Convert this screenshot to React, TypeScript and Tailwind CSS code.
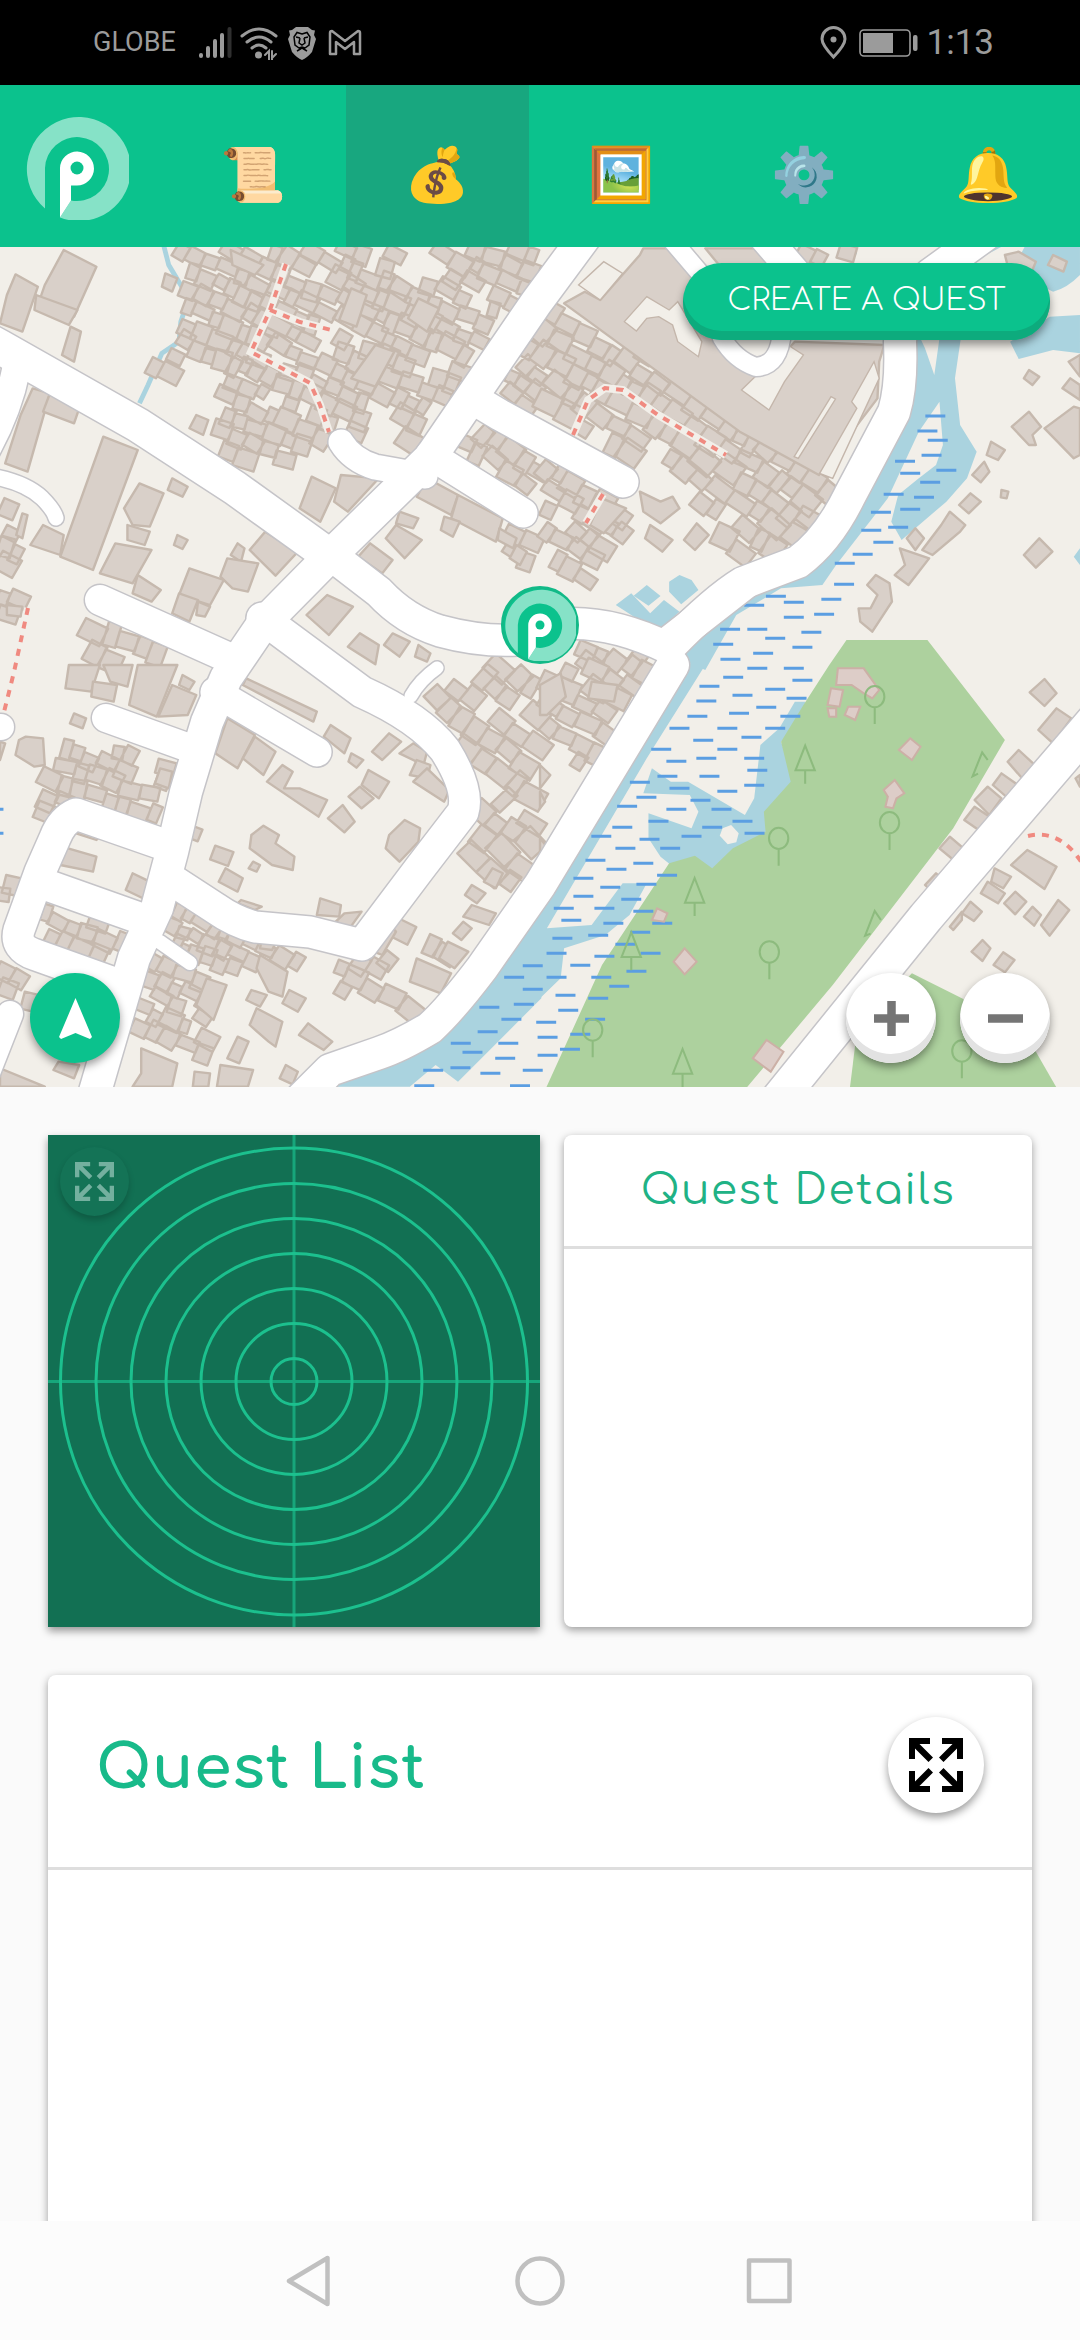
import React from "react";

type Pt = [number, number];

/* ---------- map data: four tiles, each with its own local grid ---------- */

const TILE = [
  "translate(0 245) scale(0.34437 0.33333)",
  "translate(540 245) scale(0.34437 0.33333)",
  "translate(0 665) scale(0.34437 0.33333)",
  "translate(540 665) scale(0.34437 0.33333)",
];

const parse = (s: string): Pt[] => s.split(" ").map((p) => p.split(",").map(Number) as Pt);

const inside = (x: number, y: number, poly: Pt[]) => {
  let hit = false;
  for (let i = 0, j = poly.length - 1; i < poly.length; j = i++) {
    const [xi, yi] = poly[i];
    const [xj, yj] = poly[j];
    if (yi > y !== yj > y && x < ((xj - xi) * (y - yi)) / (yj - yi) + xi) hit = !hit;
  }
  return hit;
};

type Cluster = { t: number; pts: string; a: number; c: number; holes?: string[] };

const CLUSTERS: Cluster[] = [
  {
    t: 0, a: 24, c: 50,
    pts: "515,10 1568,10 1568,90 1470,200 1330,410 1180,615 1060,575 960,530 930,650 820,680 690,650 600,590 660,400 540,350 430,460 440,370 520,290 550,160",
    holes: ["1150,30 1250,30 1235,115 1160,90", "1045,440 1170,480 1165,585 1080,540", "1350,150 1430,140 1430,200 1370,205", "905,90 960,60 1000,140 920,120", "1010,290 1085,290 1060,345", "1250,290 1300,290 1330,400 1260,350"],
  },
  { t: 0, a: 33, c: 50, pts: "1450,430 1568,240 1568,510" },
  { t: 0, a: 33, c: 52, pts: "1380,530 1568,630 1568,770 1310,610" },
  { t: 0, a: 28, c: 46, pts: "1460,850 1568,880 1568,950 1500,960" },
  { t: 0, a: 20, c: 50, pts: "0,740 70,760 50,860 30,900 55,940 40,1000 0,1000" },
  { t: 0, a: 20, c: 48, pts: "0,1020 40,1020 70,1100 20,1130 20,1240 0,1250" },
  { t: 0, a: 22, c: 62, pts: "260,1115 500,1225 510,1260 220,1260" },
  {
    t: 1, a: 33, c: 58,
    pts: "0,210 70,170 860,700 790,850 700,930 600,940 480,840 440,720 380,690 290,640 0,500",
    holes: ["330,680 400,690 440,760 380,780", "150,260 220,290 210,310 150,290"],
  },
  { t: 1, a: 33, c: 52, pts: "0,640 250,770 270,870 200,930 110,1030 0,940" },
  { t: 1, a: 30, c: 46, pts: "110,1190 210,1200 370,1260 100,1260" },
  { t: 1, a: 25, c: 50, pts: "740,10 900,10 940,60 780,40" },
  { t: 2, a: 38, c: 62, pts: "1230,100 1300,20 1568,0 1568,600 1500,690 1400,640 1290,610 1390,450 1400,330 1290,160", holes: ["1400,340 1450,330 1460,390 1410,380", "1480,380 1530,420 1500,440"] },
  { t: 3, a: 32, c: 54, pts: "0,0 330,0 130,330 70,310 110,240 0,230", holes: ["90,20 200,30 180,60 90,60"] },
  { t: 2, a: 18, c: 50, pts: "250,225 500,310 465,480 220,390 170,470 100,460 130,330 190,250", holes: ["390,330 440,330 440,370 390,370"] },
  { t: 2, a: 22, c: 50, pts: "135,700 365,800 330,890 95,810" },
  { t: 2, a: 25, c: 44, pts: "510,720 700,820 900,870 900,910 690,920 560,880 470,800" },
  { t: 2, a: 24, c: 48, pts: "450,860 590,950 640,1120 620,1190 380,1110 410,940", holes: ["440,1010 490,1020 480,1060 440,1050"] },
  { t: 2, a: 22, c: 48, pts: "0,890 140,940 100,1030 0,960" },
  { t: 2, a: 15, c: 50, pts: "0,590 60,600 20,720 0,770" },
  { t: 2, a: 30, c: 52, pts: "970,890 1130,880 1100,980 1250,1010 1170,1065 1060,1010 970,980" },
  { t: 2, a: 30, c: 50, pts: "1160,790 1290,810 1350,860 1300,900 1220,890 1150,850" },
  { t: 2, a: 30, c: 50, pts: "1240,680 1250,720 1200,770 1170,740" },
  { t: 2, a: 20, c: 46, pts: "560,490 680,560 670,590 560,530" },
];

const clusterPath = (cl: Cluster, seed: number) => {
  let s = seed * 7919 + 13;
  const rnd = () => {
    s = (s * 16807) % 2147483647;
    return s / 2147483647;
  };
  const poly = parse(cl.pts);
  const holes = (cl.holes ?? []).map(parse);
  const cx = poly[0][0];
  const cy = poly[0][1];
  const r = (cl.a * Math.PI) / 180;
  const co = Math.cos(r);
  const si = Math.sin(r);
  let d = "";
  for (let v = -1700; v < 1700; v += cl.c) {
    let u = -1700 + rnd() * cl.c;
    while (u < 1700) {
      const w = cl.c * (0.55 + rnd() * 0.75);
      const h = cl.c * (0.72 + rnd() * 0.5);
      const skip = rnd() < 0.05;
      const mu = u + w / 2;
      const mv = v + (rnd() - 0.5) * 22;
      const x = cx + mu * co - mv * si;
      const y = cy + mu * si + mv * co;
      if (!skip && inside(x, y, poly) && !holes.some((q) => inside(x, y, q))) {
        const k = (rnd() - 0.5) * 0.34;
        const c2 = Math.cos(r + k);
        const s2 = Math.sin(r + k);
        const pts = [[-w / 2, -h / 2], [w / 2, -h / 2], [w / 2, h / 2], [-w / 2, h / 2]].map(
          ([a, b]) => `${(x + a * c2 - b * s2).toFixed(0)} ${(y + a * s2 + b * c2).toFixed(0)}`
        );
        d += `M${pts.join("L")}Z`;
      }
      u += w;
    }
  }
  return d;
};

const BUILDINGS: string[][] = [
  [
    "185,15 280,65 215,215 105,195 130,120", "105,150 225,195 200,240 100,195", "45,88 110,125 65,260 0,235 20,150",
    "205,245 235,260 215,350 180,330", "480,85 515,100 500,140 470,125", "95,430 145,445 80,680 15,655 60,510",
    "145,445 230,490 215,535 125,500", "300,575 400,615 270,975 175,935", "125,840 185,870 175,930 88,900",
    "405,715 475,745 435,845 385,840 360,790", "500,700 545,725 530,755 487,735", "370,840 435,860 420,900 370,885",
    "515,870 545,885 530,912 505,900", "335,895 440,915 385,1015 290,985", "400,990 467,1035 440,1070 385,1045",
    "770,860 865,920 800,992 725,915", "690,895 710,910 700,950 670,930", "660,940 750,955 720,1040 675,1030 640,995",
    "550,970 650,1005 610,1080 520,1050", "520,1045 575,1065 550,1130 500,1105", "575,1070 610,1085 595,1115 570,1110",
    "905,695 975,730 930,830 870,790", "990,690 1100,700 1010,800 970,770", "80,810 65,880 47,870 65,805",
    "570,510 605,525 590,570 550,550", "1090,300 1145,320 1090,425 1020,400", "670,15 765,60 740,90 675,60",
    "1020,130 1065,150 1035,245 985,225", "1215,160 1275,190 1240,260 1185,220", "780,200 850,240 830,275 770,245",
    "1240,700 1330,750 1310,810 1210,755", "1330,750 1460,820 1440,890 1310,820", "1290,815 1335,830 1315,875 1280,855",
    "1150,840 1225,885 1175,940 1120,880", "1075,895 1140,945 1110,985 1040,935", "1160,800 1215,820 1200,850 1150,835",
    "1450,850 1500,880 1490,910 1445,885", "1500,900 1530,920 1510,960 1480,940",
    "950,1050 1025,1085 955,1170 890,1110", "1045,1165 1100,1200 1090,1258 1010,1205", "1140,1165 1190,1190 1160,1235 1115,1200",
    "1215,1200 1250,1225 1240,1250 1205,1235", "20,1080 65,1085 60,1115 20,1110",
  ],
  [
    "300,10 380,10 470,100 440,190 520,290 560,340 620,390 660,380 740,290 1000,300 985,350 980,460 810,690 580,560 70,175 130,140 175,165 290,30",
    "480,10 620,10 740,60 520,60", "1350,30 1390,20 1440,50 1420,100 1360,70", "1490,30 1530,50 1520,80 1475,60",
    "1420,375 1450,395 1430,420 1405,400", "1420,500 1455,545 1430,570 1440,600 1420,600 1370,545", "1550,485 1568,490 1568,630 1550,640 1465,550",
    "1535,350 1568,330 1568,395", "1540,400 1568,420 1568,465 1517,430", "1310,590 1350,615 1330,645 1297,630",
    "1290,650 1305,680 1280,712 1255,690", "1340,735 1360,740 1355,760 1338,757", "1250,745 1280,770 1245,805 1217,780",
    "1190,800 1235,840 1220,860 1140,930 1110,915 1165,840", "1090,850 1115,880 1090,915 1065,880", "1045,910 1130,940 1070,1020 1030,990 1060,960",
    "1450,880 1488,920 1440,968 1405,930", "975,990 1015,1015 1022,1070 965,1160 930,1130 925,1090 960,1090 980,1050 950,1020",
    "320,840 385,885 355,920 305,880", "455,835 490,870 450,915 418,885", "290,740 350,770 385,755 405,790 350,835 300,800", "180,760 250,790 185,865 145,840",
  ],
  [
    "200,0 290,0 265,80 190,70", "270,50 340,60 330,110 265,95", "300,0 385,0 370,65 320,50", "400,0 515,0 455,155 375,120", "500,60 570,90 545,150 460,155",
    "530,30 565,50 550,75 520,60", "215,145 250,160 240,190 203,175", "75,215 125,220 130,300 100,305 45,270 55,225",
    "660,160 740,210 690,310 625,265", "740,215 800,260 765,330 705,280", "820,300 850,320 825,370 870,370 950,405 925,455 775,350", "715,40 920,140 910,170 705,60",
    "960,180 1018,220 1000,265 940,215", "1130,205 1165,230 1110,285 1080,260", "1020,265 1055,285 1035,308 1012,290", "1070,315 1130,350 1100,400 1050,360",
    "1045,365 1085,400 1050,430 1012,395", "995,420 1030,470 1000,502 952,460", "1200,235 1240,260 1230,300 1160,265", "1210,285 1250,300 1240,340 1190,330",
    "1240,310 1305,375 1290,410 1200,350", "1175,465 1220,490 1215,530 1160,590 1120,550 1130,510", "765,482 810,510 800,535 855,575 850,615 790,600 725,550 730,510",
    "735,590 755,600 745,620 722,610", "655,610 705,640 690,680 635,650", "930,700 990,720 985,755 920,750", "1000,745 1050,740 1015,790 975,770",
    "180,545 280,575 270,620 175,600", "385,625 435,650 415,700 365,675", "210,485 290,515 280,525 205,500", "755,870 835,920 820,995 780,980 745,910",
    "730,975 775,990 755,1025 715,1005", "840,975 888,1000 865,1040 820,1015", "745,1030 820,1070 800,1145 780,1130 725,1080", "895,1075 965,1130 940,1155 868,1110",
    "830,1200 865,1220 850,1258 812,1240", "690,1115 722,1130 695,1195 660,1180", "410,1150 515,1195 500,1265 385,1265 410,1225", "600,940 658,960 620,1065 570,1020",
    "640,1200 735,1215 720,1265 630,1265", "565,1220 610,1225 605,1265 560,1265", "1210,880 1310,925 1280,985 1190,950", "1300,830 1360,860 1320,910 1275,880",
    "1345,770 1370,790 1340,825 1315,805", "1370,660 1410,685 1385,715 1350,690", "1370,720 1440,745 1420,780 1345,755", "1430,610 1460,625 1440,670 1405,650",
    "170,1190 230,1200 215,1240 155,1215", "0,1210 130,1265 0,1265", "0,230 15,235 0,285", "760,825 800,835 790,855 755,850", "1140,790 1150,800 1110,870 1085,860",
    "700,705 760,725 740,735 690,715", "465,310 500,320 490,370 450,355",
  ],
  [
    "0,60 60,25 75,95 20,150 0,150", "150,50 225,60 215,110 140,100", "0,300 30,330 0,370", "0,520 20,545 0,590", "0,380 15,410 0,430",
    "1465,42 1500,85 1465,123 1422,82", "1500,130 1543,160 1490,235 1447,195", "1390,255 1437,300 1400,340 1358,290", "1340,325 1395,365 1365,405 1315,360",
    "1300,365 1340,400 1305,450 1262,405", "1262,425 1320,465 1295,510 1232,465", "1190,515 1247,565 1215,597 1160,550", "1150,625 1180,650 1150,690 1118,660",
    "1415,555 1450,575 1500,605 1465,672 1368,600", "1320,610 1368,635 1345,670 1310,650", "1300,650 1350,685 1330,715 1280,685", "1380,680 1412,710 1380,748 1348,715",
    "1430,725 1455,750 1435,782 1405,755", "1505,705 1537,735 1480,812 1455,780", "1250,710 1283,740 1260,768 1225,745", "1225,740 1225,765 1200,795 1190,785",
    "1285,825 1308,850 1285,888 1253,860", "1345,862 1378,885 1350,922 1317,900", "1555,340 1568,330 1568,365",
  ],
];

const PARK_BUILDINGS = [
  "865,10 940,10 985,75 965,100 940,85 905,60 860,60", "845,70 880,75 870,125 835,120", "835,130 860,130 860,155 840,155", "895,125 930,125 915,165 885,150",
  "1075,220 1105,245 1080,285 1042,255", "1030,345 1058,385 1035,400 1025,430 1003,425 1010,395 998,375", "420,850 455,890 420,928 388,890", "340,730 370,745 360,770 325,765", "658,1125 707,1160 670,1220 618,1180",
];

const ROADS: { d: string; w: number }[] = [
  { d: "M-20 336L0 347L138 425L235 488L331 557", w: 34 },
  { d: "M16 370Q8 410 -14 450", w: 28 },
  { d: "M-10 476Q25 482 42 498Q54 510 56 518", w: 15 },
  { d: "M590 230L536 303L482 382L430 458L331 555L262 625L226 678L207 722L186 792L172 852L157 908L134 958L94 1095", w: 32 },
  { d: "M331 555L379 592Q405 620 440 631Q480 642 517 640L561 624Q610 620 668 648", w: 31 },
  { d: "M985 235L930 275Q901 300 900 342Q902 385 894 412L850 495Q828 540 798 562L743 583Q715 600 671 645", w: 32 },
  { d: "M745 583L668 643M673 665L540 885L482 968Q450 1010 430 1028Q400 1046 379 1053L330 1070L300 1100", w: 32 },
  { d: "M100 600L227 657", w: 30 },
  { d: "M341 442Q352 460 375 467L425 476", w: 25 },
  { d: "M475 400L500 415L623 482", w: 31 },
  { d: "M430 455L523 513", w: 29 },
  { d: "M262 618L362 692Q420 718 445 750Q470 790 463 812L420 868L362 945L310 932L255 927Q235 922 215 908L172 880", w: 31 },
  { d: "M411 696Q420 680 437 668", w: 13 },
  { d: "M215 692L317 752", w: 29 },
  { d: "M106 718L195 750", w: 28 },
  { d: "M165 845L76 814Q62 820 55 838L40 872L19 930Q14 948 36 955L120 985", w: 31 },
  { d: "M38 882L145 920", w: 31 },
  { d: "M160 942L190 963", w: 14 },
  { d: "M10 1014L-12 1070", w: 26 },
  { d: "M-10 727L1 727", w: 26 },
  { d: "M1100 714L926 917L774 1105", w: 35 },
  { d: "M670 238L710 285L722 338Q735 360 756 367Q780 366 782 330", w: 18 },
  { d: "M765 238L810 290", w: 30 },
];

const FOOTPATHS = [
  "M286 264L270 310L251 352L310 383L320 405L329 432",
  "M270 310L300 322L335 331",
  "M28 608L14 672L2 720",
  "M573 435L588 400L605 388L623 390L658 415L726 455",
  "M603 494L586 523",
  "M1028 836Q1062 828 1085 868",
];

const DASH_B =
  "1148,513 1125,558 1155,586 1137,631 1075,685 1060,649 1180,676 1133,712 1027,748 1115,757 1075,793 990,802 1040,847 962,856 997,892 937,928 885,955 883,1018 846,1063 825,1108 685,1054 737,1072 622,1081 737,1117 552,1153 631,1153 788,1162 683,1180 532,1198 762,1207 648,1225 553,1243";
const DASH_D =
  "631,10 737,10 762,46 561,37 492,64 683,73 588,91 745,100 483,108 657,127 457,154 578,145 727,154 405,190 544,190 683,190 614,217 474,226 352,253 544,253 483,280 622,280 396,289 631,316 370,334 492,334 622,361 290,352 405,370 544,379 309,397 466,406 253,424 396,433 527,433 344,469 588,469 239,487 500,487 623,505 178,514 440,514 318,523 248,550 378,550 161,586 300,595 222,613 369,631 126,640 309,658 204,667 126,694 265,703 69,730 187,730 300,739 91,766 213,775 355,775 291,802 169,811 65,820 248,838 48,865 321,865 187,874 117,901 280,919 48,937 178,937 230,964 74,991 169,1000 82,1036 160,1063 18,1072 117,1108 22,1117 87,1153 22,1171";
const DASH_C = "1547,902 1493,937 1547,973 1421,1027 1521,1018 1485,1063 1416,1100 1338,1135 1476,1135 1372,1162 1467,1180 1258,1216 1337,1208 1424,1225 1547,1216 1232,1262 1510,1262";

const dashPath = (s: string) => parse(s).map(([x, y]) => `M${x - 29} ${y}h58`).join("");

const LEAF: Pt[] = [[972, 95], [1015, 473], [693, 520], [666, 861], [153, 1095], [1225, 1158]];
const CONE: Pt[] = [[770, 280], [449, 677], [265, 840], [414, 1190]];

function MapCanvas() {
  return (
    <svg className="block h-full w-full" viewBox="0 247 1080 840" preserveAspectRatio="none">
      <rect x="0" y="247" width="1080" height="840" fill="#f2efe9" />
      <g fill="#aad3df">
        <g transform={TILE[0]}>
          <path d="M475 0L490 60L548 160L525 230L520 290L470 325L430 420L405 475" fill="none" stroke="#aad3df" strokeWidth="14" />
        </g>
        <g transform={TILE[1]}>
          <path d="M1100 270L1118 310L1145 390L1160 280H1222L1205 400L1220 540L1268 620L1240 700L1180 770L1050 885L1020 830L1040 750L1100 700L1150 660L1170 600L1160 470L1100 560L1010 760L860 960L820 1020L700 1030L570 1110L480 1275L400 1240L600 1060L780 990L940 780L1060 500L1080 270Z" />
          <path d="M1300 0H1350L1240 60H1180ZM1410 0H1568V90Q1530 130 1490 140L1370 80ZM1365 290L1480 215L1568 210V325L1490 315L1390 342ZM870 10h50v18h-40ZM1568 910L1550 935L1568 960Z" />
          <path d="M220 1080L265 1045L320 1105L360 1065L405 1100L340 1160ZM272 1052L310 1020L350 1053L315 1082ZM375 1010L405 990L440 1005L460 1035L410 1078L375 1040Z" />
        </g>
        <g transform={TILE[2]}>
          <path d="M1568 740L1290 1110L940 1265H1190L1265 1200L1330 1250L1572 1000V740Z" />
        </g>
        <g transform={TILE[3]}>
          <path d="M415 -5H483L310 280L20 790L150 780L240 655H310L260 750L190 810L70 850L60 940L0 1000V720Z" />
          <path d="M325 310L380 350L430 350L595 450L622 400L640 240L695 190L740 110L770 110L765 160L700 230L740 350L660 440L665 510L560 560L500 612L450 590L380 600L350 575L315 520V445L440 490L460 440L435 390L300 385Z" />
          <path d="M530 490L555 480L577 505L570 532L545 538L522 512Z" fill="#f2efe9" />
        </g>
      </g>
      <g transform={TILE[3]} fill="#add19e">
        <path d="M890 -75H1125L1350 225L1200 490L850 960L600 1268H18L180 900L375 595L450 572L500 610L560 550L655 500L650 440L728 350L700 230L765 120L840 0Z" />
        <path d="M1080 925L1225 1000L1440 1160L1500 1268H900L920 1100Z" />
      </g>
      <g stroke="#5b9ee2" strokeWidth="9">
        <path transform={TILE[1]} d={dashPath(DASH_B)} />
        <path transform={TILE[2]} d={dashPath(DASH_C) + "M-10 433h20M-10 505h20"} />
        <path transform={TILE[3]} d={dashPath(DASH_D)} />
      </g>
      <g fill="#d9d0c9" stroke="#c6b9ae" strokeWidth="7" strokeLinejoin="round">
        {CLUSTERS.map((c, i) => (
          <path key={i} transform={TILE[c.t]} d={clusterPath(c, i + 1)} />
        ))}
        {BUILDINGS.map((list, t) => (
          <g key={t} transform={TILE[t]}>
            {list.map((p) => (
              <polygon key={p} points={p} />
            ))}
          </g>
        ))}
      </g>
      <g transform={TILE[1]} fill="#f2efe9" stroke="#c4b6ab" strokeWidth="4">
        <path d="M185 50L240 85L175 165L112 120ZM310 155L375 195L400 170L470 290L460 335L400 290L385 240L345 215L310 220L280 258L245 230ZM650 370L720 300L765 330L710 410L665 495L585 435ZM970 350L985 400L850 700L812 685L920 490L905 470ZM845 455L858 462L750 640L738 635Z" />
      </g>
      <g transform={TILE[3]} fill="#ddcdc8" stroke="#ccb0a6" strokeWidth="6">
        {PARK_BUILDINGS.map((p) => (
          <polygon key={p} points={p} />
        ))}
      </g>
      <g transform={TILE[3]} fill="none" stroke="#8dbb7e" strokeWidth="6">
        {LEAF.map(([x, y]) => (
          <path key={x} d={`M${x} ${y + 32}v50M${x - 28} ${y}a28 32 0 1 0 56 0a28 32 0 1 0 -56 0`} />
        ))}
        {CONE.map(([x, y]) => (
          <path key={x} d={`M${x} ${y - 38}L${x + 28} ${y + 36}H${x - 28}ZM${x} ${y + 36}v40`} />
        ))}
        <path d="M1300 285L1284 262L1256 334L1272 326M990 765L972 738L944 812L960 806" />
      </g>
      <g fill="none" stroke="#f2efe9" strokeWidth="8">
        {FOOTPATHS.map((d) => (
          <path key={d} d={d} />
        ))}
      </g>
      <g fill="none" stroke="#f08a80" strokeWidth="4" strokeDasharray="7 7">
        {FOOTPATHS.map((d) => (
          <path key={d} d={d} />
        ))}
      </g>
      <g fill="none" stroke="#c5c4c8" strokeLinecap="round" strokeLinejoin="round">
        {ROADS.map((r) => (
          <path key={r.d} d={r.d} strokeWidth={r.w + 3} />
        ))}
      </g>
      <g fill="none" stroke="#ffffff" strokeLinecap="round" strokeLinejoin="round">
        {ROADS.map((r) => (
          <path key={r.d} d={r.d} strokeWidth={r.w} />
        ))}
      </g>
    </svg>
  );
}

/* ------------------------------- icons -------------------------------- */

function Logo({ className }: { className?: string }) {
  return (
    <svg className={className} viewBox="0 0 104 104">
      <path d="M20 92.500A52 52 0 1 1 35 101.500L46 84.500A32 32 0 1 0 20 52Z" fill="#86e2c7" />
      <path d="M35 101.500V52A17 17 0 1 1 52 69.500H46V84.500Z" fill="#fff" />
      <circle cx="52" cy="52" r="6.500" fill="#0bc28d" />
    </svg>
  );
}

function ExpandIcon({ className }: { className?: string }) {
  return (
    <svg className={className} viewBox="0 0 54 54" fill="currentColor">
      {[0, 90, 180, 270].map((a) => (
        <path key={a} transform={`rotate(${a} 27 27)`} d="M0 0H21V6H10.500L24 19.500L19.500 24L6 10.500V21H0Z" />
      ))}
    </svg>
  );
}

function StatusBar() {
  return (
    <div className="flex h-[85px] items-center bg-black pr-[86px] pl-[93px] font-[Roboto,sans-serif] text-[#9b9b9b]">
      <span className="w-[105px] text-[27px] leading-none">GLOBE</span>
      <svg className="h-[34px] w-[34px]" viewBox="0 0 34 34" strokeWidth="4" strokeLinecap="round" stroke="#9b9b9b">
        <path d="M3 29v1M10 22v8M17 15v15M24 9v21" />
        <path d="M31.500 3v27" stroke="#303030" />
      </svg>
      <svg className="ml-[8px] h-[34px] w-[38px]" viewBox="0 0 38 34" fill="none" stroke="#9b9b9b" strokeWidth="3" strokeLinecap="round">
        <path d="M2 10Q19 -4 36 10M7 16Q19 6 31 16M12 22Q19 16 26 22" />
        <circle cx="18.500" cy="29" r="3.500" fill="#9b9b9b" stroke="none" />
        <path d="M25 29l4-4v9M32 34v-9M36 28l-4 4" strokeWidth="2" />
      </svg>
      <svg className="ml-[9px] h-[36px] w-[30px]" viewBox="0 0 30 36">
        <path d="M9 2H21L25 5L28 5.500L27 10L29 14L25 27Q20 33 15 35Q10 33 5 27L1 14L3 10L2 5.500L5 5Z" fill="#9b9b9b" />
        <path d="M15 9L20 7.500L23 12L22 20L18 23L15 22L12 23L8 20L7 12L10 7.500ZM9 12L13 13M21 12L17 13M13 13L12 18L15 20L18 18L17 13M10 26L15 23L20 26" fill="none" stroke="#000" strokeWidth="1.500" />
      </svg>
      <svg className="ml-[11px] h-[28px] w-[34px]" viewBox="0 0 34 28" fill="none" stroke="#9b9b9b" strokeWidth="2.500" strokeLinejoin="round">
        <path d="M2 25V4Q2 2 4 2L17 12L30 2Q32 2 32 4V25H26V13L17 20L8 13V25Z" />
      </svg>
      <div className="ml-auto flex items-center">
        <svg className="h-[34px] w-[27px]" viewBox="0 0 27 34" fill="none" stroke="#9b9b9b" strokeWidth="3">
          <path d="M13.500 31Q2 19 2 13A11.500 11.500 0 0 1 25 13Q25 19 13.500 31Z" />
          <circle cx="13.500" cy="13.500" r="3" fill="#9b9b9b" stroke="none" />
        </svg>
        <svg className="ml-[12px] h-[30px] w-[59px]" viewBox="0 0 59 30">
          <rect x="1" y="2" width="50" height="26" rx="4" fill="none" stroke="#9b9b9b" strokeWidth="1.600" />
          <rect x="4" y="5" width="30" height="20" fill="#9b9b9b" />
          <rect x="54" y="7" width="4.500" height="16" rx="2" fill="#9b9b9b" />
        </svg>
        <span className="ml-[9px] text-[35px] leading-none">1:13</span>
      </div>
    </div>
  );
}

function Tab({ glyph, active }: { glyph: string; active?: boolean }) {
  return (
    <div className={`flex flex-1 items-center justify-center pt-[18px] ${active ? "bg-[#18a77f]" : ""}`}>
      <span className="font-['Noto_Color_Emoji',sans-serif] text-[53px] leading-none">{glyph}</span>
    </div>
  );
}

function TopNav() {
  return (
    <nav className="flex h-[162px] bg-[#0bc28d]">
      <div className="w-[162px] pt-[31px] pl-[25px]">
        <Logo className="h-[104px] w-[104px]" />
      </div>
      <Tab glyph="📜" />
      <Tab glyph="💰" active />
      <Tab glyph="🖼️" />
      <Tab glyph="⚙️" />
      <Tab glyph="🔔" />
    </nav>
  );
}

function ZoomButton({ minus }: { minus?: boolean }) {
  return (
    <button className="flex h-[90px] w-[90px] items-center justify-center rounded-full bg-white shadow-[inset_0_-9px_0_#e2e2e2,0_4px_8px_rgba(0,0,0,0.4)]">
      <svg className="h-[35px] w-[35px]" viewBox="0 0 35 35" fill="#757575">
        <rect y="13.250" width="35" height="8.500" />
        {!minus && <rect x="13.250" width="8.500" height="35" />}
      </svg>
    </button>
  );
}

function MapPanel() {
  return (
    <section className="relative h-[840px] overflow-hidden">
      <MapCanvas />
      <button className="absolute top-[16px] right-[30px] h-[77px] w-[367px] rounded-full bg-[#0bc28d] pb-[3px] text-center text-[31px] font-light whitespace-nowrap text-white shadow-[inset_0_-9px_0_#0dab7d,0_5px_9px_rgba(0,0,0,0.4)]">
        CREATE A QUEST
      </button>
      <div className="absolute top-[339px] left-[501px] h-[78px] w-[78px] rounded-full border-[3px] border-[#12b987] bg-[#0bc28d]">
        <Logo className="h-full w-full" />
      </div>
      <button className="absolute bottom-[24px] left-[30px] flex h-[90px] w-[90px] items-center justify-center rounded-full bg-[#0bc28d] shadow-[0_4px_8px_rgba(0,0,0,0.4)]">
        <svg className="h-[41px] w-[33px]" viewBox="0 0 33 41" fill="#fff">
          <path d="M16.500 0L33 39L31 41L16.500 35L2 41L0 39Z" />
        </svg>
      </button>
      <div className="absolute right-[30px] bottom-[24px] flex gap-6">
        <ZoomButton />
        <ZoomButton minus />
      </div>
    </section>
  );
}

function Radar() {
  return (
    <div className="relative h-[492px] w-[492px] bg-[#127053] shadow-[0_4px_8px_rgba(0,0,0,0.4)]">
      <svg className="block h-full w-full" viewBox="0 0 492 492" fill="none" strokeWidth="3">
        <path d="M246 0V492M0 246.500H492" stroke="#17a67b" />
        {[23, 58, 93, 128, 163, 198, 233.5].map((r) => (
          <circle key={r} cx="246" cy="246.500" r={r} stroke="#1cc08e" />
        ))}
      </svg>
      <div className="absolute top-[12px] left-[12px] flex h-[69px] w-[69px] items-center justify-center rounded-full bg-[#147356] text-[#74b09f] shadow-[0_4px_6px_rgba(0,0,0,0.2)]">
        <ExpandIcon className="h-[39px] w-[39px]" />
      </div>
    </div>
  );
}

const CARD_SHADOW = "shadow-[0_3px_8px_rgba(0,0,0,0.38)]";

export default function App() {
  return (
    <div className="flex h-[2340px] w-[1080px] flex-col overflow-hidden bg-[#fafafa] font-[Comfortaa,Quicksand,Lato,sans-serif]">
      <StatusBar />
      <TopNav />
      <MapPanel />
      <main className="flex min-h-0 flex-1 flex-col gap-12 overflow-hidden px-12 pt-12">
        <div className="flex gap-6">
          <Radar />
          <section className={`flex h-[492px] flex-1 flex-col rounded-lg bg-white ${CARD_SHADOW}`}>
            <h2 className="h-[114px] border-b-[3px] border-[#dedede] pt-[30px] text-center text-[42px] leading-[52px] tracking-[1.500px] text-[#20b285]">
              Quest Details
            </h2>
          </section>
        </div>
        <section className={`h-[700px] shrink-0 rounded-lg bg-white ${CARD_SHADOW}`}>
          <div className="flex h-[195px] items-center justify-between border-b-[3px] border-[#dedede] px-12 pb-[12px]">
            <h1 className="pt-[8px] text-[60px] leading-none font-bold tracking-[0.900px] text-[#18ba8a]">Quest List</h1>
            <button className="flex h-24 w-24 items-center justify-center rounded-full bg-white text-black shadow-[0_4px_8px_rgba(0,0,0,0.4)]">
              <ExpandIcon className="h-[54px] w-[54px]" />
            </button>
          </div>
        </section>
      </main>
      <footer className="flex h-[119px] shrink-0 items-center bg-[#fcfcfc] pl-[286px]">
        <svg className="h-[52px] w-[506px]" viewBox="286 2255 506 52" fill="none" stroke="#c0c0c0" strokeWidth="4.500" strokeLinejoin="round">
          <path d="M289 2281L327.500 2258V2304Z" />
          <circle cx="540" cy="2281" r="22.500" />
          <rect x="749" y="2260.500" width="40.500" height="40.500" />
        </svg>
      </footer>
    </div>
  );
}
